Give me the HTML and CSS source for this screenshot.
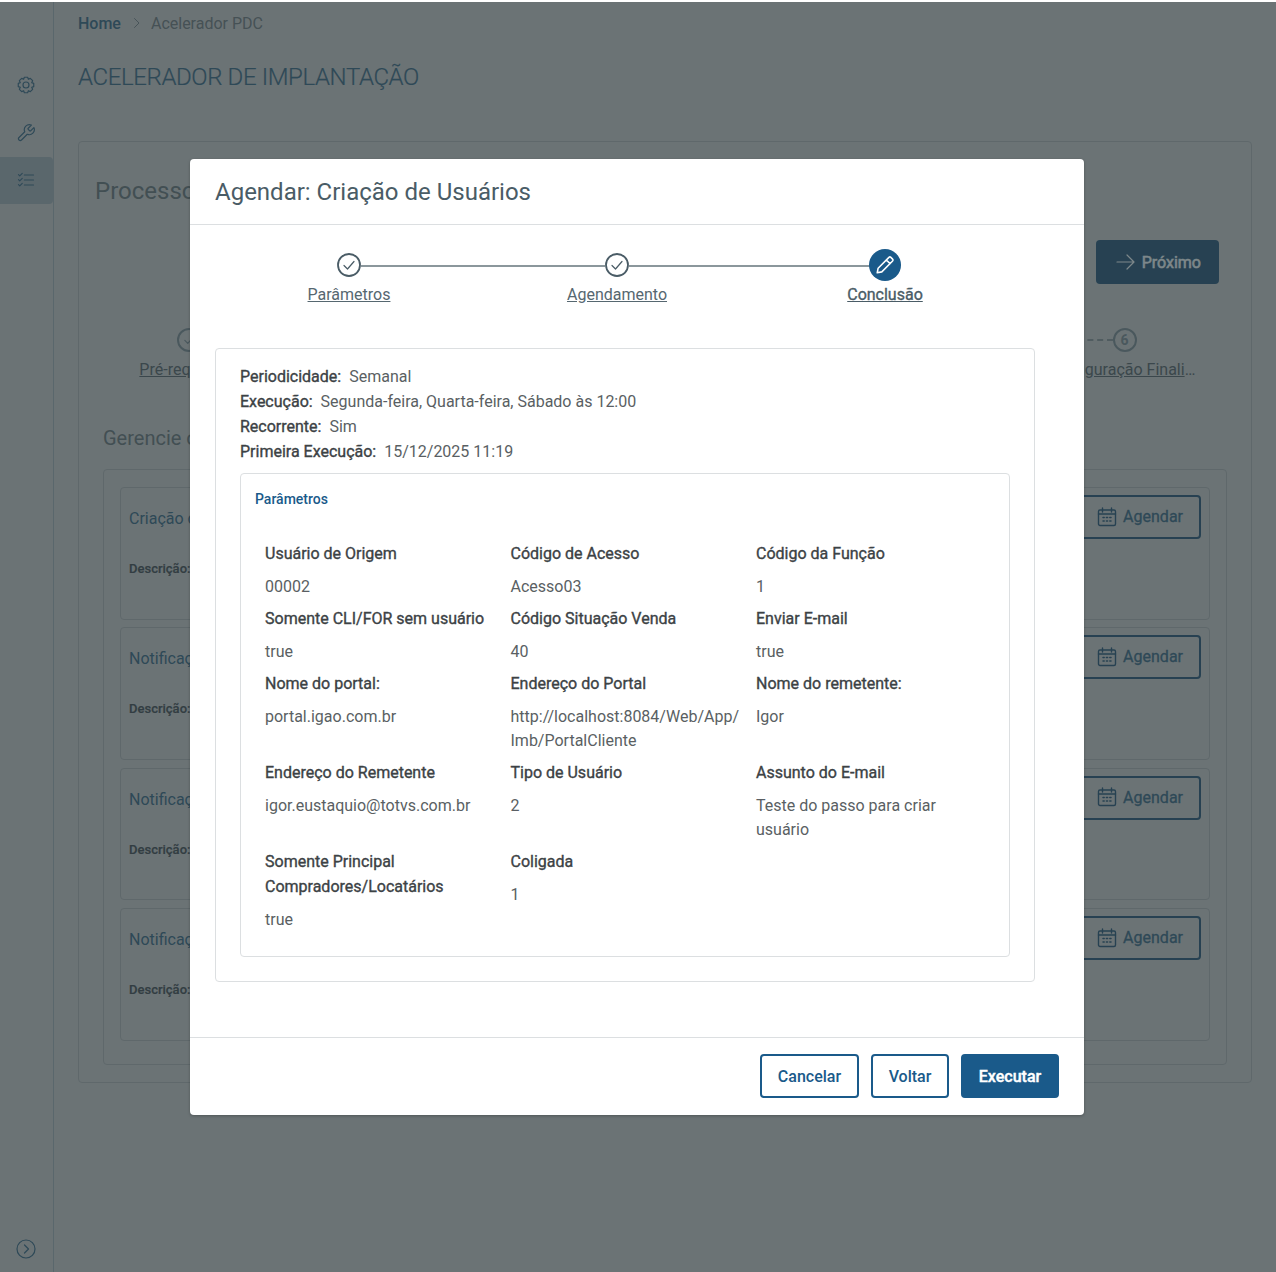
FILE: index.html
```html
<!DOCTYPE html>
<html lang="pt-BR">
<head>
<meta charset="utf-8">
<title>Acelerador de Implantação</title>
<link rel="stylesheet" href="styles.css">
</head>
<body>
<div class="app">
  <aside class="sidebar">
    <nav class="side-nav">
      <a class="side-item"><svg class="side-icon" viewBox="0 0 24 24"><path d="M21.29 10.020V13.980L18.840 14.830L19.970 17.170L17.170 19.970L14.830 18.840L13.980 21.290H10.020L9.170 18.840L6.830 19.970L4.030 17.170L5.160 14.830L2.710 13.980V10.020L5.160 9.170L4.030 6.830L6.830 4.030L9.170 5.160L10.020 2.710H13.980L14.830 5.160L17.170 4.030L19.970 6.830L18.840 9.170Z"/><circle cx="12" cy="12" r="3.600"/></svg></a>
      <a class="side-item"><svg class="side-icon" viewBox="0 0 24 24"><path d="M14.7 6.3a1 1 0 0 0 0 1.4l1.6 1.6a1 1 0 0 0 1.4 0l3.77-3.77a6 6 0 0 1-7.94 7.94l-6.91 6.91a2.12 2.12 0 0 1-3-3l6.91-6.91a6 6 0 0 1 7.94-7.94l-3.76 3.76z"/></svg></a>
      <a class="side-item side-item-active"><svg class="side-icon" viewBox="0 0 24 24"><path d="M10 6h11M10 12h11M10 18h11M3 5.500l1.500 1.500L7.500 4M3 11.500l1.500 1.500 3-3M3 17.500l1.500 1.500 3-3"/></svg></a>
    </nav>
    <a class="side-toggle"><svg class="toggle-icon" viewBox="0 0 20 20"><circle cx="10" cy="10" r="9"/><path d="M8.500 6l4 4-4 4"/></svg></a>
  </aside>

  <main class="main">
    <div class="breadcrumb"><a class="crumb-home">Home</a><svg class="crumb-sep" viewBox="0 0 10 12"><path d="M2.500 1.500l4.500 4.500-4.500 4.500"/></svg><span class="crumb-current">Acelerador PDC</span></div>
    <h1 class="page-title">ACELERADOR DE IMPLANTAÇÃO</h1>
    <section class="outer-card">
      <h2 class="outer-title">Processos</h2>
      <div class="next-row"><button class="btn-next"><svg class="next-icon" viewBox="0 0 20 20"><path d="M1 10h17M11 3l7 7-7 7"/></svg>Próximo</button></div>
      <div class="bg-steps">
        <div class="bg-step"><span class="bg-dot"><svg class="bg-check" viewBox="0 0 24 24"><path d="M7 12.500l3.500 3.500L17 9"/></svg></span><a class="bg-label">Pré-requisitos</a></div>
        <div class="bg-step"></div>
        <div class="bg-step"></div>
        <div class="bg-step"></div>
        <div class="bg-step bg-step-dash"></div>
        <div class="bg-step"><span class="bg-dot">6</span><a class="bg-label bg-label-last">Configuração Finalização</a></div>
      </div>
      <div class="manage">
        <h3 class="manage-title">Gerencie os processos</h3>
        <div class="panel">
          <article class="proc-card"><div class="proc-info"><h4 class="proc-title">Criação de Usuários</h4><p class="proc-desc">Descrição:</p></div><button class="btn-sched"><svg class="cal-icon" viewBox="0 0 20 20"><use href="#cal"/></svg>Agendar</button></article>
          <article class="proc-card"><div class="proc-info"><h4 class="proc-title">Notificação</h4><p class="proc-desc">Descrição:</p></div><button class="btn-sched"><svg class="cal-icon" viewBox="0 0 20 20"><use href="#cal"/></svg>Agendar</button></article>
          <article class="proc-card"><div class="proc-info"><h4 class="proc-title">Notificação</h4><p class="proc-desc">Descrição:</p></div><button class="btn-sched"><svg class="cal-icon" viewBox="0 0 20 20"><use href="#cal"/></svg>Agendar</button></article>
          <article class="proc-card"><div class="proc-info"><h4 class="proc-title">Notificação</h4><p class="proc-desc">Descrição:</p></div><button class="btn-sched"><svg class="cal-icon" viewBox="0 0 20 20"><use href="#cal"/></svg>Agendar</button></article>
        </div>
      </div>
    </section>
  </main>
</div>

<svg class="defs" width="0" height="0"><defs><g id="cal"><rect x="1.500" y="3" width="17" height="15.500" rx="1.500"/><path d="M5.500 1v4M14.500 1v4M1.500 7h17"/><path class="cal-dots" d="M6 10.500h1.200M9.400 10.500h1.200M12.800 10.500h1.200M6 14h1.200M9.400 14h1.200M12.800 14h1.200"/></g></defs></svg>

<div class="overlay"></div>

<div class="modal">
  <header class="modal-head"><h2 class="modal-title">Agendar: Criação de Usuários</h2></header>
  <div class="modal-body">
    <div class="stepper">
      <div class="step step-line"><svg class="step-icon" viewBox="0 0 24 24"><circle cx="12" cy="12" r="11"/><path d="M7 12.500l3.500 3.500L17 8.500"/></svg><a class="step-label">Parâmetros</a></div>
      <div class="step step-line"><svg class="step-icon" viewBox="0 0 24 24"><circle cx="12" cy="12" r="11"/><path d="M7 12.500l3.500 3.500L17 8.500"/></svg><a class="step-label">Agendamento</a></div>
      <div class="step step-active"><span class="step-current"><svg class="pencil" viewBox="0 0 24 24"><path d="M3.500 20.500l1-5L16.300 3.700a1.500 1.500 0 0 1 2.100 0l1.900 1.900a1.500 1.500 0 0 1 0 2.100L8.500 19.500zM13.500 6.500l4 4"/></svg></span><a class="step-label">Conclusão</a></div>
    </div>
    <div class="summary">
      <p class="meta"><b class="meta-key">Periodicidade:</b> Semanal</p>
      <p class="meta"><b class="meta-key">Execução:</b> Segunda-feira, Quarta-feira, Sábado às 12:00</p>
      <p class="meta"><b class="meta-key">Recorrente:</b> Sim</p>
      <p class="meta"><b class="meta-key">Primeira Execução:</b> 15/12/2025 11:19</p>
      <div class="params">
        <h3 class="params-title">Parâmetros</h3>
        <dl class="params-grid">
          <div class="param"><dt>Usuário de Origem</dt><dd>00002</dd></div>
          <div class="param"><dt>Código de Acesso</dt><dd>Acesso03</dd></div>
          <div class="param"><dt>Código da Função</dt><dd>1</dd></div>
          <div class="param"><dt>Somente CLI/FOR sem usuário</dt><dd>true</dd></div>
          <div class="param"><dt>Código Situação Venda</dt><dd>40</dd></div>
          <div class="param"><dt>Enviar E-mail</dt><dd>true</dd></div>
          <div class="param"><dt>Nome do portal:</dt><dd>portal.igao.com.br</dd></div>
          <div class="param"><dt>Endereço do Portal</dt><dd>http://localhost:8084/Web/App/<wbr>Imb/PortalCliente</dd></div>
          <div class="param"><dt>Nome do remetente:</dt><dd>Igor</dd></div>
          <div class="param"><dt>Endereço do Remetente</dt><dd>igor.eustaquio@totvs.com.br</dd></div>
          <div class="param"><dt>Tipo de Usuário</dt><dd>2</dd></div>
          <div class="param"><dt>Assunto do E-mail</dt><dd>Teste do passo para criar usuário</dd></div>
          <div class="param"><dt>Somente Principal Compradores/Locatários</dt><dd>true</dd></div>
          <div class="param"><dt>Coligada</dt><dd>1</dd></div>
        </dl>
      </div>
    </div>
  </div>
  <footer class="modal-foot">
    <button class="btn btn-outline">Cancelar</button>
    <button class="btn btn-outline">Voltar</button>
    <button class="btn btn-primary">Executar</button>
  </footer>
</div>
</body>
</html>
```
FILE: styles.css
```css
* { box-sizing: border-box; }
html, body { margin: 0; height: 1272px; overflow: hidden; }
body { font-family: Roboto, "Noto Sans", sans-serif; background: #d2cdca; position: relative; color: #3a3f44; font-size: 16px; }
h1, h2, h3, h4, p, dl, dd { margin: 0; font-weight: 400; }
button { font-family: inherit; cursor: pointer; }
svg { fill: none; stroke: currentColor; stroke-linecap: round; stroke-linejoin: round; }
.defs { position: absolute; }

.app { display: flex; height: 1272px; }
.sidebar { width: 54px; flex: none; border-right: 1px solid #a9b0b4; display: flex; flex-direction: column; justify-content: space-between; padding: 62px 0 13px; color: #3a6480; }
.side-nav { display: flex; flex-direction: column; margin-top: 1px; margin-bottom: -1px; }
.side-item { height: 47px; display: flex; align-items: center; justify-content: center; border-radius: 0 4px 4px 0; padding: 0 1px 2px 0; }
.side-item:first-child { padding-bottom: 4px; }
.side-item-active { background: #a8aeb5; }
.side-icon { width: 20px; height: 20px; stroke-width: 1.400; }
.side-toggle { display: flex; justify-content: center; padding-right: 1px; }
.toggle-icon { width: 20px; height: 20px; stroke-width: 1.200; }

.main { flex: 1; min-width: 0; padding: 13px 24px 0; }
.breadcrumb { display: flex; align-items: center; height: 20px; font-size: 16px; }
.crumb-home { color: #3a6480; font-weight: 500; }
.crumb-sep { width: 10px; height: 12px; margin: 0 9px 0 11px; color: #7a7f85; stroke-width: 1; }
.crumb-current { color: #75787c; }
.page-title { font-size: 24px; line-height: 32px; margin-top: 28px; color: #3a6480; font-weight: 300; letter-spacing: -.38px; -webkit-text-stroke: .2px #3a6480; }
.outer-card { margin-top: 48px; height: 942px; border: 1px solid #b3b2b1; border-radius: 4px; padding: 33px 0 0 16px; }
.outer-title { font-size: 24px; line-height: 32px; color: #6d7377; }
.next-row { display: flex; justify-content: flex-end; padding-right: 32px; margin-top: 33px; }
.btn-next { width: 123px; height: 44px; background: #285273; border: 0; border-radius: 4px; color: #fff; font-size: 16px; font-weight: 400; -webkit-text-stroke: .5px #fff; display: flex; align-items: center; justify-content: flex-end; gap: 6px; padding: 0 18px 0 0; }
.next-icon { width: 20px; height: 20px; stroke-width: 1.200; }
.bg-steps { display: flex; margin: 44px 0 0 0; }
.bg-step { width: 187.200px; height: 52px; display: flex; flex-direction: column; align-items: center; position: relative; }
.bg-step-dash::after { content: ""; position: absolute; left: 106px; right: -82px; top: 11px; border-top: 2px dashed #8e9396; }
.bg-dot { width: 24px; height: 24px; border: 2px solid #808a90; border-radius: 50%; font-size: 14px; font-weight: 700; color: #808a90; display: flex; align-items: center; justify-content: center; flex: none; }
.bg-check { width: 20px; height: 20px; stroke-width: 1.500; }
.bg-label { margin-top: 8px; line-height: 20px; max-width: 146px; white-space: nowrap; overflow: hidden; text-overflow: ellipsis; text-decoration: underline; color: #5a6064; }
.bg-label-last { max-width: 148px; margin-right: 6px; }
.manage { margin: 45px 0 0 8px; }
.manage-title { font-size: 20px; line-height: 26px; color: #6d7377; }
.panel { width: 1124px; height: 596px; margin-top: 18px; border: 1px solid #b3b2b1; border-radius: 4px; padding: 17px 16px; display: flex; flex-direction: column; gap: 7.700px; }
.proc-card { height: 132.700px; border: 1px solid #b3b2b1; border-radius: 4px; padding: 7px 8px 0; display: flex; justify-content: space-between; }
.proc-title { font-size: 16px; line-height: 47px; color: #3a6480; }
.proc-desc { font-size: 13px; line-height: 16px; margin-top: 19px; font-weight: 500; -webkit-text-stroke: .2px #45474c; color: #45474c; }
.btn-sched { width: 180px; height: 44px; background: none; border: 2px solid #285273; border-radius: 4px; color: #3a6480; font-size: 16px; font-weight: 400; -webkit-text-stroke: .3px #3a6480; display: flex; align-items: center; justify-content: flex-end; padding: 0 16px 1px 0; gap: 6px; }
.cal-icon { width: 20px; height: 20px; stroke-width: 1.400; color: #285273; }
.cal-dots { stroke-width: 1.500; }

.overlay { position: absolute; inset: 2px 0 0 0; background: rgba(38, 55, 60, .6); }
body::before { content: ""; position: absolute; inset: 0 0 auto 0; height: 2px; background: #fff; }

.modal { position: absolute; left: 190px; top: 159px; width: 894px; height: 956px; background: #fff; border-radius: 4px; box-shadow: 0 1px 3px rgba(0,0,0,.25); display: flex; flex-direction: column; color: #4a5a63; }
.modal-head { height: 66px; border-bottom: 1px solid #dcdfe1; padding: 17px 25px 0; }
.modal-title { font-size: 24px; line-height: 32px; color: #4a5c66; }
.modal-body { flex: 1; padding: 24px 25px 0; }
.stepper { display: flex; height: 99px; width: 804px; }
.step { width: 268px; height: 56px; position: relative; display: flex; flex-direction: column; align-items: center; padding-top: 4px; }
.step-line::after { content: ""; position: absolute; left: 146px; width: 244px; top: 16px; height: 2px; background: #8b979c; }
.step-line .step-label { margin-top: 8px; }
.step-icon { width: 24px; height: 24px; color: #4a5c66; stroke-width: 1.800; flex: none; }
.step-icon path { stroke-width: 1.200; }
.step-active { padding-top: 0; }
.step-current { width: 32px; height: 32px; border-radius: 50%; background: #1a5a8a; display: flex; align-items: center; justify-content: center; color: #fff; flex: none; }
.pencil { width: 22px; height: 22px; stroke-width: 1.700; }
.step-label { line-height: 20px; color: #566770; text-decoration: underline; }
.step-active .step-label { margin-top: 4px; font-weight: 400; -webkit-text-stroke: .35px #4a5c66; color: #4a5c66; }

.summary { width: 820px; height: 634px; border: 1px solid #dcdfe1; border-radius: 4px; padding: 15px 24px; }
.meta { line-height: 25px; color: #5a5f63; }
.meta-key { font-weight: 400; -webkit-text-stroke: .35px #3c4245; color: #3c4245; margin-right: 4px; }
.params { margin-top: 8.500px; height: 484px; border: 1px solid #dcdfe1; border-radius: 4px; padding: 16px 14px 0; }
.params-title { font-size: 14px; line-height: 18px; font-weight: 500; color: #1a5a8a; }
.params-grid { display: grid; grid-template-columns: repeat(3, 245.500px); margin: 33px 0 0 10px; }
.param { padding-right: 16px; }
.param dt { line-height: 25px; font-weight: 400; -webkit-text-stroke: .35px #3c4245; color: #3c4245; }
.param dd { line-height: 24px; margin: 9.500px 0 6.500px; color: #5a5f63; }

.modal-foot { height: 78px; border-top: 1px solid #dcdfe1; padding: 16px 25px 0; display: flex; justify-content: flex-end; gap: 12px; }
.btn { height: 44px; border-radius: 4px; font-size: 16px; font-weight: 500; border: 2px solid #1a5a8a; padding: 0; }
.btn:nth-child(1) { width: 99px; }
.btn:nth-child(2) { width: 78px; }
.btn:nth-child(3) { width: 98px; }
.btn-outline { background: #fff; color: #1a5a8a; }
.btn-primary { background: #1a5a8a; color: #fff; font-weight: 500; -webkit-text-stroke: .4px #fff; }
```
